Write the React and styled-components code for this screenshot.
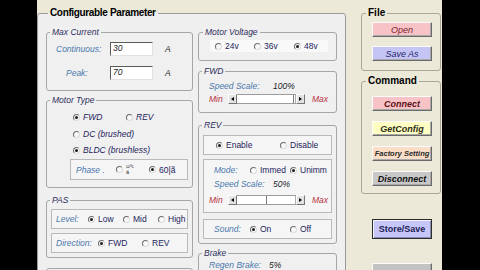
import React from 'react';
import styled, { createGlobalStyle } from 'styled-components';

const GlobalStyle = createGlobalStyle`
  html, body {
    margin: 0;
    padding: 0;
    background: #000;
  }
  body {
    font-family: "Liberation Sans", Arial, sans-serif;
  }
`;

const Screen = styled.div`
  display: flex;
  width: 480px;
  height: 270px;
  overflow: hidden;
  background: #000;
`;

const Gutter = styled.div`
  flex: ${({ $w }) => ($w ? 'none' : '1')};
  width: ${({ $w }) => ($w ? `${$w}px` : 'auto')};
  background: #000;
`;

const Window = styled.div`
  flex: none;
  display: flex;
  align-items: flex-start;
  width: 405px;
  height: 270px;
  padding-top: 13px;
  box-sizing: border-box;
  background: #ece9d8;
`;

const Group = styled.div`
  flex: none;
  box-sizing: border-box;
  width: ${({ $w }) => ($w ? `${$w}px` : 'auto')};
  height: ${({ $h }) => $h}px;
  margin-top: ${({ $mt = 0 }) => $mt}px;
  padding: ${({ $pad = '0' }) => $pad};
  border: 1px solid ${({ $line = '#a6a6a6' }) => $line};
  border-radius: 3px;
  background: ${({ $bg = '#f0f0f0' }) => $bg};
`;

const Title = styled.div`
  width: fit-content;
  height: 12px;
  margin: -7px 0 0 ${({ $indent = 3 }) => $indent}px;
  padding: 0 2px;
  line-height: 12px;
  background: ${({ $outer, $inner }) =>
    $outer ? `linear-gradient(${$outer} 6px, ${$inner} 6px)` : 'inherit'};
  white-space: nowrap;
  letter-spacing: ${({ $track = 0 }) => $track}px;
  font-size: ${({ $bold }) => ($bold ? '10px' : '8.5px')};
  font-weight: ${({ $bold }) => ($bold ? 700 : 400)};
  font-style: ${({ $bold }) => ($bold ? 'normal' : 'italic')};
  color: ${({ $bold }) => ($bold ? '#000' : '#2e2e5c')};
`;

const Columns = styled.div`
  display: flex;
  gap: 5px;
  margin-top: 13px;
`;

const Column = styled.div`
  flex: none;
  display: flex;
  flex-direction: column;
  width: ${({ $w }) => $w}px;
  margin-left: ${({ $ml = 0 }) => $ml}px;
`;

const Row = styled.div`
  display: flex;
  align-items: center;
  height: ${({ $h = 12 }) => $h}px;
  margin-top: ${({ $mt = 0 }) => $mt}px;
  padding-left: ${({ $pl = 0 }) => $pl}px;
`;

const Inset = styled.div`
  flex: none;
  display: flex;
  flex-direction: ${({ $stack }) => ($stack ? 'column' : 'row')};
  align-items: ${({ $stack }) => ($stack ? 'stretch' : 'center')};
  box-sizing: border-box;
  width: ${({ $w }) => $w}px;
  height: ${({ $h }) => $h}px;
  margin: ${({ $mt = 0 }) => $mt}px 0 0 ${({ $ml = 0 }) => $ml}px;
  padding-left: ${({ $pl = 0 }) => $pl}px;
  border: ${({ $plain }) => ($plain ? 'none' : '1px solid #b9b9b9')};
  background: ${({ $plain }) => ($plain ? '#f9f9f9' : '#f5f5f5')};
`;

const Label = styled.span`
  flex: none;
  box-sizing: border-box;
  width: ${({ $w }) => ($w ? `${$w}px` : 'auto')};
  padding-left: ${({ $pl = 0 }) => $pl}px;
  font-size: 8.5px;
  font-style: italic;
  color: #4a78ad;
  white-space: nowrap;
`;

const Value = styled.span`
  font-size: 8.5px;
  font-style: italic;
  color: #1f1f1f;
  margin-left: ${({ $ml = 0 }) => $ml}px;
`;

const Limit = styled.span`
  flex: none;
  width: ${({ $w }) => ($w ? `${$w}px` : 'auto')};
  margin-left: ${({ $ml = 0 }) => $ml}px;
  font-size: 8.5px;
  font-style: italic;
  color: #b7303e;
`;

const TextBox = styled.input`
  flex: none;
  box-sizing: border-box;
  width: 43px;
  height: 14px;
  margin: 0;
  padding: 0 0 3px 2px;
  border: 1px solid;
  border-color: #5a5a5a #e2e2e2 #e2e2e2 #5a5a5a;
  background: #fff;
  font-family: inherit;
  font-size: 8.5px;
  font-style: italic;
  color: #222;
  outline: none;
`;

const OptionWrap = styled.span`
  flex: none;
  display: inline-flex;
  align-items: center;
  gap: 3px;
  width: ${({ $w }) => ($w ? `${$w}px` : 'auto')};
  font-size: 8.5px;
  font-style: ${({ $italic }) => ($italic ? 'italic' : 'normal')};
  color: #24245c;
  white-space: nowrap;
`;

const RadioDot = styled.span`
  flex: none;
  position: relative;
  box-sizing: border-box;
  width: 7px;
  height: 7px;
  border-radius: 50%;
  border: 1px solid;
  border-color: #6c6c6c #dcdcdc #dcdcdc #6c6c6c;
  background: #f8f8f8;

  &::after {
    content: '';
    display: ${({ $on }) => ($on ? 'block' : 'none')};
    position: absolute;
    left: 1px;
    top: 1px;
    width: 3px;
    height: 3px;
    border-radius: 50%;
    background: #1c1c1c;
  }
`;

const Garbled = styled.span`
  display: inline-flex;
  flex-direction: column;
  line-height: 5px;
  font-size: 5.5px;
  color: #333;
`;

const Scroll = styled.div`
  flex: none;
  display: flex;
  width: 77px;
  height: 10px;
`;

const ScrollArrow = styled.span`
  flex: none;
  display: flex;
  align-items: center;
  justify-content: center;
  box-sizing: border-box;
  width: 9px;
  height: 10px;
  border: 1px solid;
  border-color: #fdfdfd #767676 #767676 #fdfdfd;
  background: #e3e3e3;

  &::before {
    content: '';
    border-style: solid;
    border-width: ${({ $dir }) => ($dir === 'left' ? '2px 3px 2px 0' : '2px 0 2px 3px')};
    border-color: ${({ $dir }) =>
      $dir === 'left'
        ? 'transparent #000 transparent transparent'
        : 'transparent transparent transparent #000'};
  }
`;

const Track = styled.span`
  flex: 1;
  position: relative;
  box-sizing: border-box;
  border-top: 1px solid #9c9c9c;
  border-bottom: 1px solid #9c9c9c;
  background: #fff;
`;

const Thumb = styled.span`
  position: absolute;
  top: 0;
  bottom: 0;
  right: 0;
  box-sizing: border-box;
  width: ${({ $w }) => $w}px;
  border-left: 1px solid #7c7c7c;
  border-right: 1px solid #b0b0b0;
  background: #fff;
`;

const Button = styled.button`
  display: block;
  box-sizing: border-box;
  width: 60px;
  height: ${({ $h = 15 }) => $h}px;
  margin: ${({ $mt = 0 }) => $mt}px 0 0 ${({ $ml = 10 }) => $ml}px;
  padding: 0;
  font-family: inherit;
  font-size: ${({ $size = 9 }) => $size}px;
  font-weight: ${({ $bold }) => ($bold ? 700 : 400)};
  font-style: ${({ $upright }) => ($upright ? 'normal' : 'italic')};
  color: ${({ $ink = '#222' }) => $ink};
  background: ${({ $tone }) => $tone};
  border: 1px solid;
  border-color: ${({ $framed }) =>
    $framed ? '#2b2b2b' : '#fbfbfb #6a6a6a #6a6a6a #fbfbfb'};
  box-shadow: ${({ $framed }) =>
    $framed ? 'inset 1px 1px 0 #f4f4ff, inset -1px -1px 0 #8a8ab0' : 'inset -1px -1px 0 #a9a9a9'};
  white-space: nowrap;
`;

const Option = ({ on, w, italic, children }) => (
  <OptionWrap $w={w} $italic={italic}>
    <RadioDot $on={on} />
    {children}
  </OptionWrap>
);

const Slider = ({ thumb }) => (
  <Scroll>
    <ScrollArrow $dir="left" />
    <Track>
      <Thumb $w={thumb} />
    </Track>
    <ScrollArrow $dir="right" />
  </Scroll>
);

const LeftColumn = () => (
  <Column $w={147}>
    <Group $h={59}>
      <Title>Max Current</Title>
      <Row $mt={4} $h={14}>
        <Label $w={63} $pl={9}>Continuous:</Label>
        <TextBox readOnly value="30" />
        <Value $ml={12}>A</Value>
      </Row>
      <Row $mt={10} $h={14}>
        <Label $w={63} $pl={19}>Peak:</Label>
        <TextBox readOnly value="70" />
        <Value $ml={12}>A</Value>
      </Row>
    </Group>

    <Group $mt={9} $h={88}>
      <Title>Motor Type</Title>
      <Row $mt={5} $pl={26}>
        <Option on italic w={53}>FWD</Option>
        <Option italic>REV</Option>
      </Row>
      <Row $mt={5} $pl={26}>
        <Option italic>DC (brushed)</Option>
      </Row>
      <Row $mt={4} $pl={26}>
        <Option on italic>BLDC (brushless)</Option>
      </Row>
      <Inset $mt={3} $ml={23} $w={118} $h={21}>
        <Label $w={45} $pl={5}>Phase .</Label>
        <Option w={33}>
          <Garbled>
            <span>¹²⁰¹</span>
            <span>ä</span>
          </Garbled>
        </Option>
        <Option on>60|ã</Option>
      </Inset>
    </Group>

    <Group $mt={12} $h={58}>
      <Title>PAS</Title>
      <Inset $mt={3} $ml={4} $w={137} $h={20}>
        <Label $w={36} $pl={4}>Level:</Label>
        <Option on w={35}>Low</Option>
        <Option w={35}>Mid</Option>
        <Option>High</Option>
      </Inset>
      <Inset $mt={4} $ml={4} $w={137} $h={20}>
        <Label $w={46} $pl={4}>Direction:</Label>
        <Option on w={44}>FWD</Option>
        <Option>REV</Option>
      </Inset>
    </Group>

    <Group $mt={10} $h={40} />
  </Column>
);

const MiddleColumn = () => (
  <Column $w={139}>
    <Group $h={29}>
      <Title $indent={4}>Motor Voltage</Title>
      <Inset $plain $mt={2} $ml={11} $w={118} $h={12} $pl={5}>
        <Option w={39}>24v</Option>
        <Option w={40}>36v</Option>
        <Option on>48v</Option>
      </Inset>
    </Group>

    <Group $mt={10} $h={42}>
      <Title>FWD</Title>
      <Row $mt={4} $h={10} $pl={10}>
        <Label $w={64}>Speed Scale:</Label>
        <Value>100%</Value>
      </Row>
      <Row $mt={2} $h={11} $pl={10}>
        <Limit $w={19}>Min</Limit>
        <Slider thumb={3} />
        <Limit $ml={7}>Max</Limit>
      </Row>
    </Group>

    <Group $mt={12} $h={119}>
      <Title>REV</Title>
      <Inset $mt={4} $ml={4} $w={129} $h={20} $pl={12}>
        <Option on w={64}>Enable</Option>
        <Option>Disable</Option>
      </Inset>
      <Inset $stack $mt={4} $ml={4} $w={129} $h={54}>
        <Row $mt={4} $pl={10}>
          <Label $w={36}>Mode:</Label>
          <Option w={40}>Immed</Option>
          <Option on>Unimm</Option>
        </Row>
        <Row $mt={3} $h={10} $pl={10}>
          <Label $w={59}>Speed Scale:</Label>
          <Value>50%</Value>
        </Row>
        <Row $mt={5} $h={11} $pl={5}>
          <Limit $w={19}>Min</Limit>
          <Slider thumb={30} />
          <Limit $ml={7}>Max</Limit>
        </Row>
      </Inset>
      <Inset $mt={6} $ml={4} $w={129} $h={20} $pl={10}>
        <Label $w={36}>Sound:</Label>
        <Option on w={40}>On</Option>
        <Option>Off</Option>
      </Inset>
    </Group>

    <Group $mt={9} $h={40}>
      <Title>Brake</Title>
      <Row $mt={1} $h={10} $pl={10}>
        <Label $w={60}>Regen Brake:</Label>
        <Value>5%</Value>
      </Row>
    </Group>
  </Column>
);

const SideColumn = () => (
  <Column $w={80} $ml={15}>
    <Group $h={58} $bg="#ece9d8" $line="#a9a79c">
      <Title $bold $indent={4}>File</Title>
      <Button $mt={3} $tone="#f7c3c6" $ink="#7a2430">Open</Button>
      <Button $mt={9} $tone="#c5c5f5" $ink="#25256a">Save As</Button>
    </Group>

    <Group $mt={10} $h={113} $bg="#ece9d8" $line="#a9a79c">
      <Title $bold $indent={4}>Command</Title>
      <Button $mt={9} $bold $tone="#f7c3c6" $ink="#5e1218">Connect</Button>
      <Button $mt={10} $bold $tone="#ffffc4" $ink="#2c2c14">GetConfig</Button>
      <Button $mt={10} $bold $size={7.5} $tone="#f9ddc6" $ink="#2a2a2a">Factory Setting</Button>
      <Button $mt={10} $bold $tone="#c8c8c8" $ink="#111">Disconnect</Button>
    </Group>

    <Button $framed $upright $bold $mt={25} $ml={11} $h={20} $tone="#c6c6f8" $ink="#1c1c55">
      Store/Save
    </Button>
    <Button $mt={24} $ml={11} $h={20} $tone="#c3c3c3" $ink="#222" />
  </Column>
);

export default function App() {
  return (
    <>
      <GlobalStyle />
      <Screen>
        <Gutter $w={37} />
        <Window>
          <Group $w={309} $h={300} $pad="0 8px" $line="#9b9b9b" $bg="#efefef">
            <Title $bold $indent={2} $track={-0.35} $outer="#ece9d8" $inner="#efefef">
              Configurable Parameter
            </Title>
            <Columns>
              <LeftColumn />
              <MiddleColumn />
            </Columns>
          </Group>
          <SideColumn />
        </Window>
        <Gutter />
      </Screen>
    </>
  );
}
